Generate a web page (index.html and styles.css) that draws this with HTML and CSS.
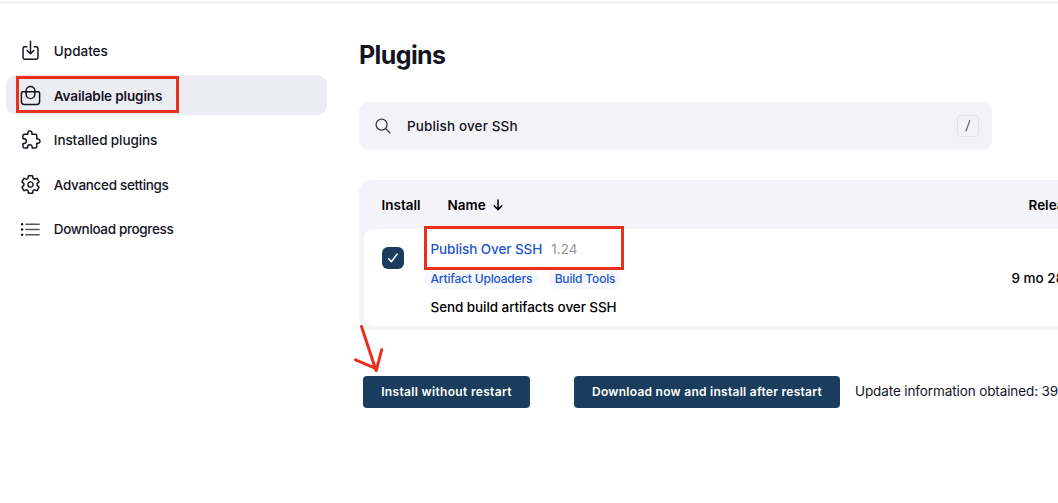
FILE: index.html
```html
<!DOCTYPE html>
<html lang="en">
<head>
<meta charset="utf-8">
<title>Plugins</title>
<link rel="stylesheet" href="styles.css">
</head>
<body>
<div class="topline"></div>
<div class="page">
  <nav class="sidebar">
    <a class="item"><svg class="icon" viewBox="0 0 512 512"><path d="M346 166h52a40 40 0 0 1 40 40v222a40 40 0 0 1-40 40H114a40 40 0 0 1-40-40V206a40 40 0 0 1 40-40h52M176 256l80 80 80-80M256 30v296"/></svg><span class="t-updates">Updates</span></a>
    <a class="item active"><svg class="icon" viewBox="0 0 512 512"><path d="M66 166h380a32 32 0 0 1 32 32v204a72 72 0 0 1-72 72H106a72 72 0 0 1-72-72V198a32 32 0 0 1 32-32zM150 166v-22a106 106 0 0 1 212 0v82a106 106 0 0 1-212 0z"/></svg><span class="t-available">Available plugins</span><i class="mark mark-nav"></i></a>
    <a class="item"><svg class="icon puzzle" viewBox="0 0 512 512"><path d="M413.660 246.100H386a2 2 0 0 1-2-2v-77.240A38.860 38.860 0 0 0 345.140 128H267.900a2 2 0 0 1-2-2V98.340c0-27.140-21.500-49.860-48.640-50.330a49.530 49.530 0 0 0-50.400 49.510V126a2 2 0 0 1-2 2H87.620A39.740 39.740 0 0 0 48 167.620V238a2 2 0 0 0 2 2h26.910c29.370 0 53.680 25.480 54.090 54.850.42 29.870-23.510 57.150-53.290 57.150H50a2 2 0 0 0-2 2v70.380A39.740 39.740 0 0 0 87.620 464H158a2 2 0 0 0 2-2v-20.930c0-30.280 24.750-56.350 55-57.060 30.100-.7 57 20.310 57 50.280V462a2 2 0 0 0 2 2h71.140A38.860 38.860 0 0 0 384 425.140v-78a2 2 0 0 1 2-2h28.480c27.630 0 49.520-22.670 49.520-50.400s-23.200-48.640-50.340-48.640z"/></svg><span class="t-installed">Installed plugins</span></a>
    <a class="item"><svg class="icon gear" viewBox="0 0 512 512"><path d="M262.290 192.310a64 64 0 1 0 57.400 57.400 64.130 64.130 0 0 0-57.400-57.400zM416.390 256a154.340 154.340 0 0 1-1.530 20.790l45.210 35.460a10.810 10.810 0 0 1 2.450 13.750l-42.770 74a10.810 10.810 0 0 1-13.140 4.590l-44.900-18.080a16.110 16.110 0 0 0-15.170 1.750A164.480 164.480 0 0 1 325 400.800a15.940 15.940 0 0 0-8.820 12.140l-6.730 47.890a11.080 11.080 0 0 1-10.680 9.170h-85.540a11.110 11.110 0 0 1-10.690-8.870l-6.720-47.820a16.070 16.070 0 0 0-9-12.220 155.300 155.300 0 0 1-21.460-12.570 16 16 0 0 0-15.110-1.710l-44.890 18.070a10.810 10.810 0 0 1-13.140-4.580l-42.770-74a10.800 10.800 0 0 1 2.450-13.750l38.210-30a16.050 16.050 0 0 0 6-14.080c-.36-4.170-.58-8.330-.58-12.500s.21-8.270.58-12.350a16 16 0 0 0-6.070-13.940l-38.190-30A10.810 10.810 0 0 1 49.480 186l42.770-74a10.810 10.810 0 0 1 13.140-4.590l44.900 18.080a16.110 16.110 0 0 0 15.170-1.750A164.480 164.480 0 0 1 187 111.200a15.940 15.940 0 0 0 8.820-12.140l6.730-47.890A11.080 11.080 0 0 1 213.230 42h85.540a11.110 11.110 0 0 1 10.690 8.870l6.720 47.820a16.070 16.070 0 0 0 9 12.220 155.300 155.300 0 0 1 21.460 12.570 16 16 0 0 0 15.110 1.710l44.890-18.070a10.810 10.810 0 0 1 13.140 4.580l42.770 74a10.800 10.800 0 0 1-2.450 13.750l-38.210 30a16.050 16.050 0 0 0-6.050 14.080c.33 4.140.55 8.300.55 12.470z"/></svg><span class="t-advanced">Advanced settings</span></a>
    <a class="item"><svg class="icon list" viewBox="0 0 20 20"><path class="thin" d="M5.600 5H18.200M5.600 10H18.200M5.600 15H18.200"/><path class="dots" d="M2 5h.01M2 10h.01M2 15h.01"/></svg><span class="t-download">Download progress</span></a>
  </nav>
  <main class="main">
    <h1 class="title">Plugins</h1>
    <div class="search">
      <svg class="lens" viewBox="0 0 16 16"><circle cx="6.600" cy="6.600" r="5.500"/><path d="M10.700 10.700l4.300 4.300"/></svg>
      <span class="query">Publish over SSh</span>
      <kbd class="key"><svg class="slash" viewBox="0 0 8 14"><path d="M5.800 1.500L2 12"/></svg></kbd>
    </div>
    <section class="table">
      <div class="head">
        <span class="h-install">Install</span>
        <span class="h-name">Name</span>
        <svg class="sort" viewBox="0 0 10 12"><path d="M5 1v9.500M1.200 6.800L5 10.600l3.800-3.800"/></svg>
        <span class="h-released">Released</span>
      </div>
      <div class="row">
        <span class="check"><svg viewBox="0 0 22 22"><path d="M6.700 11.700l2.700 3 5.700-7.600"/></svg></span>
        <div class="plugin">
          <div class="name"><a class="link">Publish Over SSH</a><span class="version">1.24</span><i class="mark mark-plugin"></i></div>
          <div class="tags"><a class="tag tag-artifact">Artifact Uploaders</a><a class="tag tag-build">Build Tools</a></div>
          <div class="desc">Send build artifacts over SSH</div>
        </div>
        <span class="age">9 mo 28 days ago</span>
      </div>
    </section>
    <div class="actions">
      <button class="btn btn-install"><span>Install without restart</span></button>
      <button class="btn btn-download"><span>Download now and install after restart</span></button>
      <span class="info">Update information obtained: 39</span>
      <svg class="arrow" viewBox="0 0 32 52"><path d="M7.500 3.500L22 47.500M1.500 36.800L22.300 45.700M27.700 26.700L22.300 47.500"/></svg>
    </div>
  </main>
</div>
</body>
</html>
```
FILE: styles.css
```css
* { box-sizing: border-box; }
body {
  margin: 0;
  width: 1058px;
  height: 503px;
  overflow: hidden;
  background: #fff;
  color: #14141f;
  font: 500 13.500px/20px Inter, "Liberation Sans", sans-serif;
}
span, a, h1, .desc { white-space: nowrap; }
svg { fill: none; stroke: currentColor; stroke-linecap: round; stroke-linejoin: round; flex: none; }
.topline { height: 3px; margin-top: 1px; background: #f4f4f8; }
.page { display: flex; height: 499px; overflow: hidden; }
.sidebar { width: 359px; flex: none; padding: 26.500px 32px 0 6px; display: flex; flex-direction: column; gap: 4.700px; }
.item { position: relative; display: flex; align-items: center; height: 40px; padding-left: 14px; gap: 12.800px; border-radius: 10px; }
.item.active { background: #ecedf3; font-weight: 600; }
.t-available { letter-spacing: -.12px; padding-top: 1px; }
.t-installed { letter-spacing: -.1px; padding-top: 1px; }
.t-advanced { letter-spacing: -.32px; }
.t-download { letter-spacing: -.35px; }
.icon { width: 21px; height: 21px; stroke-width: 36; }
.puzzle { transform: translateX(1px); }
.list { stroke-width: 1.500; }
.thin { stroke: #55555f; }
.dots { stroke-width: 2.400; }
.mark { position: absolute; border: 3px solid #e9301f; }
.mark-nav { left: 10px; top: 1px; width: 163px; height: 37px; }
.main { width: 760px; flex: none; }
.title { margin: 34px 0 0; font-size: 25px; line-height: 34px; font-weight: 700; letter-spacing: -.6px; }
.search { width: 633px; height: 48px; margin-top: 30px; padding: 0 13px 0 16px; display: flex; align-items: center; background: #f2f2f7; border-radius: 10px; }
.lens { width: 16px; height: 16px; stroke: #3d3d49; stroke-width: 1.300; }
.query { margin-left: 16px; letter-spacing: .13px; }
.key { margin-left: auto; width: 22px; height: 22px; border: 1px solid #e2e2ec; border-radius: 4px; display: flex; align-items: center; justify-content: center; }
.slash { width: 8px; height: 14px; stroke: #69697f; stroke-width: 1.300; }
.table { height: 150px; margin-top: 30px; padding: 0 0 4px 4.500px; background: #f3f3f8; border-radius: 12px 0 0 12px; color: #000; }
.head { height: 49px; display: flex; align-items: center; padding-left: 18px; font-weight: 600; }
.h-install { width: 66px; }
.sort { width: 10px; height: 12px; margin-left: 7px; stroke-width: 1.500; }
.h-name { width: 38px; }
.h-released { margin-left: 526px; }
.row { height: 97px; display: flex; background: #fff; border-radius: 9px; }
.check { width: 22px; height: 22px; margin: 18px 0 0 18px; background: #1a3d5d; border-radius: 6px; color: #fff; flex: none; }
.check svg { display: block; stroke-width: 1.500; }
.plugin { width: 581px; flex: none; padding: 10px 0 0 20px; }
.name { position: relative; height: 20px; padding-left: 7px; display: flex; gap: 9px; }
.link, .tag { color: #2157cc; }
.link { letter-spacing: -.08px; }
.version { color: #95959f; font-weight: 400; }
.mark-plugin { left: .400px; top: -13px; width: 200px; height: 44px; }
.tags { display: flex; gap: 8.500px; margin-top: 10px; }
.tag { height: 20px; padding: 0 7px; border-radius: 10px; background: #f5f8fe; font-size: 12px; line-height: 20px; letter-spacing: -.18px; }
.desc { margin: 8px 0 0 7px; letter-spacing: -.08px; }
.age { margin: 39px 0 0 27px; }
.actions { position: relative; display: flex; align-items: center; margin-top: 46px; padding-left: 4px; }
.btn { height: 32px; padding: 0; border: 0; border-radius: 4px; background: #1a3d5d; color: #fff; font: 600 12px/32px Inter, "Liberation Sans", sans-serif; flex: none; }
.btn-install { width: 167px; letter-spacing: .33px; }
.btn-download { width: 266px; margin-left: 44px; letter-spacing: .27px; }
.info { margin-left: 15px; padding-bottom: 2px; font-weight: 400; letter-spacing: -.11px; }
.arrow { position: absolute; left: -5px; top: -53px; width: 32px; height: 52px; stroke: #e9301f; stroke-width: 3; }
```
